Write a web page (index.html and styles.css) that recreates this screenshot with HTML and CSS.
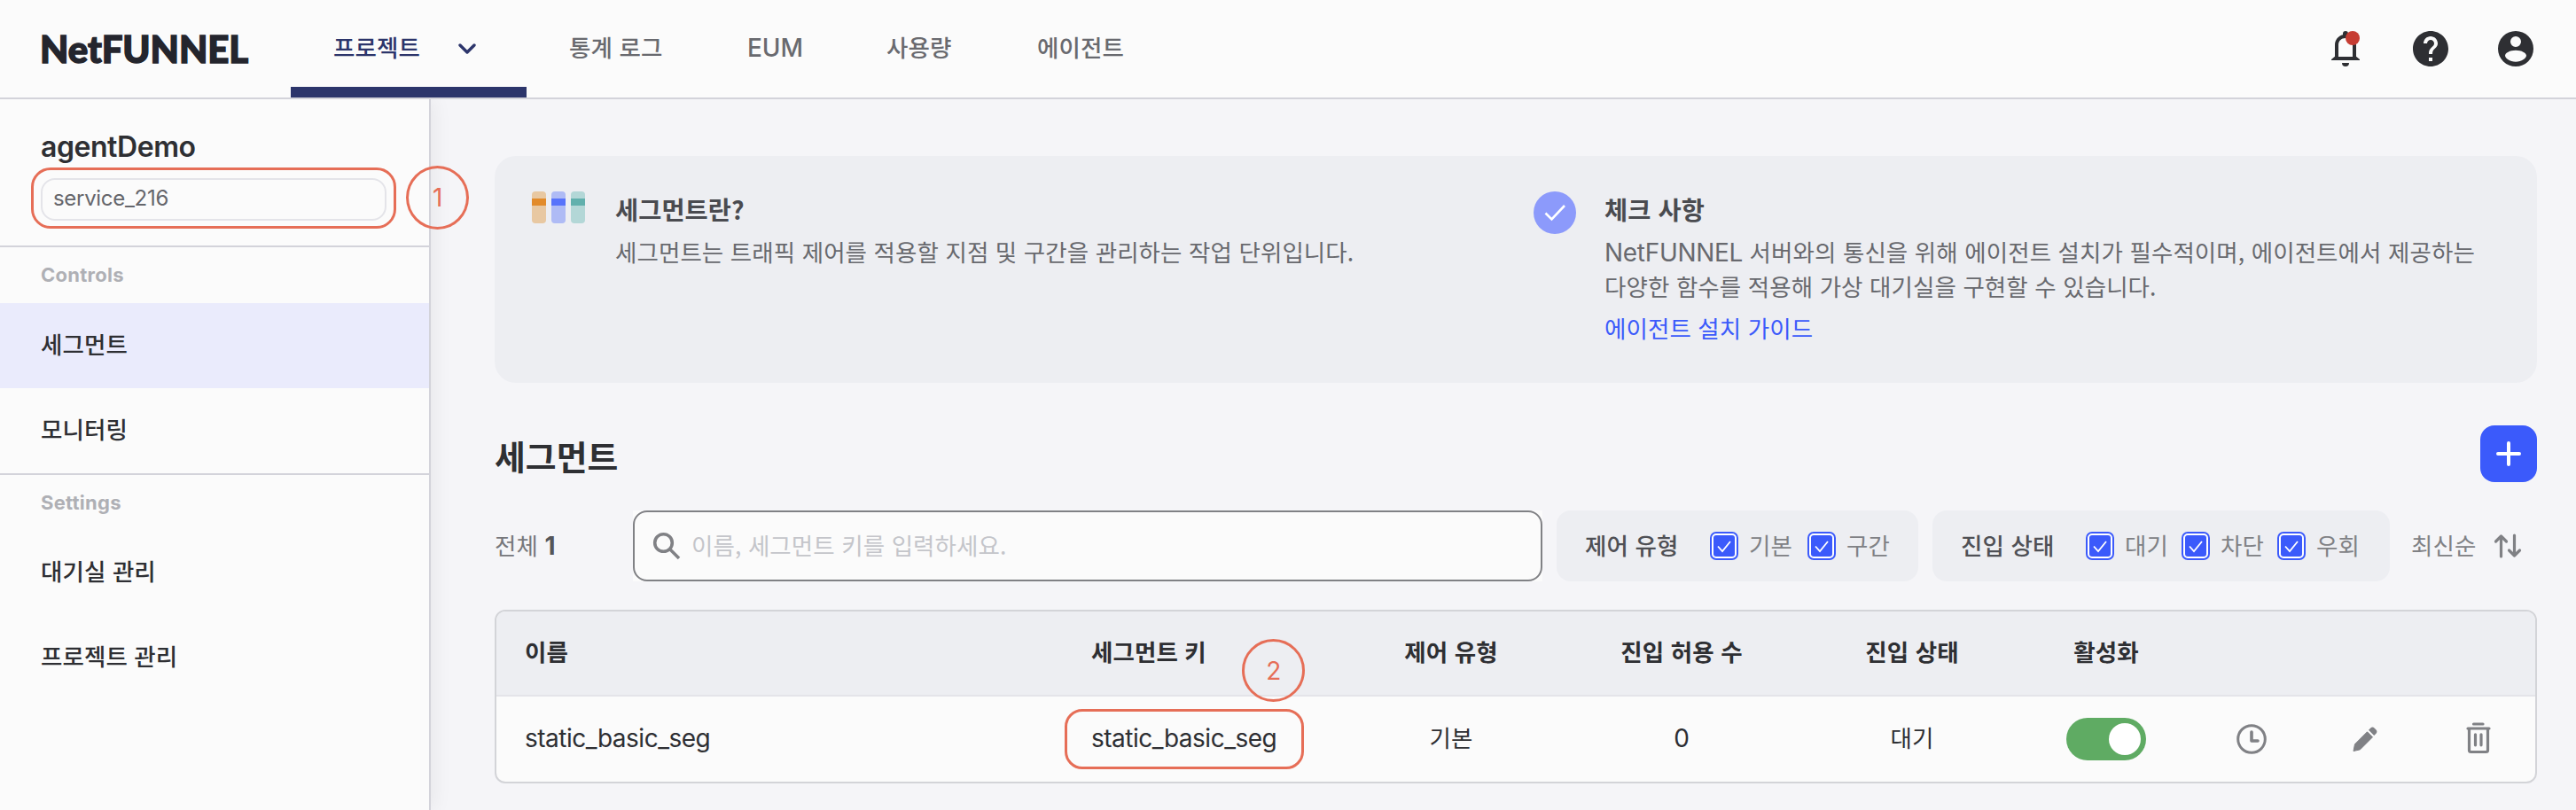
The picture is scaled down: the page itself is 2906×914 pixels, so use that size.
FILE: index.html
```html
<!DOCTYPE html>
<html lang="ko">
<head>
<meta charset="utf-8">
<title>NetFUNNEL</title>
<link rel="stylesheet" href="styles.css">
</head>
<body>
<header class="topbar">
  <div class="logo">NetFUNNEL</div>
  <nav class="tabs">
    <a class="tab tab-active"><span>프로젝트</span>
      <svg class="chevron" width="20" height="12" viewBox="0 0 20 12" fill="none" stroke="currentColor" stroke-width="3.4" stroke-linecap="round" stroke-linejoin="round"><path d="M2 2l8 8 8-8"/></svg>
    </a>
    <a class="tab tab-stats">통계 로그</a>
    <a class="tab tab-eum latin">EUM</a>
    <a class="tab tab-usage">사용량</a>
    <a class="tab">에이전트</a>
  </nav>
  <div class="tools">
    <span class="bell">
      <svg width="48" height="48" viewBox="0 0 24 24" fill="currentColor"><path d="M4 18.500V18l2-1.600V10c0-3.100 1.900-5.300 4.500-5.900V3.500a1.500 1.500 0 0 1 3 0v.6C16.100 4.700 18 6.900 18 10v6.400l2 1.600v.5zM8 16.500h8V10c0-2.400-1.600-4-4-4s-4 1.600-4 4zM10 20h4a2 2 0 0 1-4 0z"/></svg>
      <i class="dot"></i>
    </span>
    <svg width="48" height="48" viewBox="0 0 24 24" fill="currentColor"><path d="M12 2C6.480 2 2 6.480 2 12s4.480 10 10 10 10-4.480 10-10S17.520 2 12 2zm1 17h-2v-2h2v2zm2.070-7.750-.9.920C13.450 12.900 13 13.500 13 15h-2v-.5c0-1.100.450-2.100 1.170-2.830l1.240-1.260c.370-.360.590-.860.590-1.410 0-1.100-.9-2-2-2s-2 .9-2 2H8c0-2.210 1.790-4 4-4s4 1.790 4 4c0 .880-.360 1.680-.930 2.250z"/></svg>
    <svg width="48" height="48" viewBox="0 0 24 24" fill="currentColor" fill-rule="evenodd"><path d="M12 2a10 10 0 1 0 0 20 10 10 0 0 0 0-20zm0 3a3 3 0 1 1 0 6 3 3 0 0 1 0-6zM12 12.900c3.300 0 6 1.500 6 3 0 1.400-2.700 3.500-6 3.500s-6-2.100-6-3.500c0-1.500 2.700-3 6-3z"/></svg>
  </div>
</header>
<div class="body">
  <aside class="sidebar">
    <div class="project">
      <h1 class="project-name">agentDemo</h1>
      <div class="service">service_216
        <i class="mark mark-service"></i>
        <b class="num num-one">1</b>
      </div>
    </div>
    <section class="group">
      <h2 class="group-title">Controls</h2>
      <a class="item item-active">세그먼트</a>
      <a class="item">모니터링</a>
    </section>
    <section class="group group-settings">
      <h2 class="group-title">Settings</h2>
      <a class="item">대기실 관리</a>
      <a class="item">프로젝트 관리</a>
    </section>
  </aside>
  <main class="main">
    <section class="info">
      <div class="info-col info-segment">
        <svg class="info-icon" width="60" height="36" viewBox="0 0 60 36">
          <rect width="16" height="36" rx="4" fill="#e8c8a2"/><rect y="8" width="16" height="8" fill="#e28b2b"/>
          <rect x="22" width="16" height="36" rx="4" fill="#afbbf5"/><rect x="22" y="8" width="16" height="8" fill="#5873fb"/>
          <rect x="44" width="16" height="36" rx="4" fill="#b3d7d7"/><rect x="44" y="8" width="16" height="8" fill="#61b0ad"/>
        </svg>
        <div class="info-text">
          <h3>세그먼트란?</h3>
          <p>세그먼트는 트래픽 제어를 적용할 지점 및 구간을 관리하는 작업 단위입니다.</p>
        </div>
      </div>
      <div class="info-col">
        <svg class="info-icon" width="48" height="48" viewBox="0 0 48 48"><circle cx="24" cy="24" r="24" fill="#8c9afb"/><path d="M13.500 24.500l7 7L35 16" fill="none" stroke="#fff" stroke-width="2.600"/></svg>
        <div class="info-text">
          <h3>체크 사항</h3>
          <p><span class="latin">NetFUNNEL</span> 서버와의 통신을 위해 에이전트 설치가 필수적이며, 에이전트에서 제공하는<br>다양한 함수를 적용해 가상 대기실을 구현할 수 있습니다.</p>
          <a class="guide">에이전트 설치 가이드</a>
        </div>
      </div>
    </section>
    <div class="heading">
      <h2>세그먼트</h2>
      <button class="add"><svg width="28" height="28" viewBox="0 0 28 28" stroke="#fff" stroke-width="4" stroke-linecap="round"><path d="M14 2v24M2 14h24"/></svg></button>
    </div>
    <div class="filters">
      <div class="total">전체 <b>1</b></div>
      <div class="search-wrap"><div class="search">
        <svg width="32" height="32" viewBox="0 0 32 32" fill="none" stroke="#808185" stroke-width="3.600"><circle cx="12.500" cy="12.500" r="9.800"/><path d="M19.500 19.500L30 30"/></svg>
        <span>이름, 세그먼트 키를 입력하세요.</span>
      </div></div>
      <div class="filter">
        <span class="filter-name">제어 유형</span>
        <label class="option option-type"><i class="box"><svg viewBox="0 0 24 24"><path d="M5 12.500l5 5.500 9-11"/></svg></i><span>기본</span></label>
        <label class="option"><i class="box"><svg viewBox="0 0 24 24"><path d="M5 12.500l5 5.500 9-11"/></svg></i><span>구간</span></label>
      </div>
      <div class="filter filter-state">
        <span class="filter-name">진입 상태</span>
        <label class="option"><i class="box"><svg viewBox="0 0 24 24"><path d="M5 12.500l5 5.500 9-11"/></svg></i><span>대기</span></label>
        <label class="option"><i class="box"><svg viewBox="0 0 24 24"><path d="M5 12.500l5 5.500 9-11"/></svg></i><span>차단</span></label>
        <label class="option"><i class="box"><svg viewBox="0 0 24 24"><path d="M5 12.500l5 5.500 9-11"/></svg></i><span>우회</span></label>
      </div>
      <div class="sort"><span>최신순</span>
        <svg width="32" height="28" viewBox="0 0 32 28" fill="none" stroke="#808185" stroke-width="3.200" stroke-linecap="round" stroke-linejoin="round"><path d="M8.500 26V3M2.500 9l6-6 6 6M23.500 2v23M17.500 19l6 6 6-6"/></svg>
      </div>
    </div>
    <div class="table">
      <div class="row row-head">
        <div>이름</div><div>세그먼트 키</div><div class="mid">제어 유형</div><div class="mid">진입 허용 수</div><div class="mid">진입 상태</div><div class="mid">활성화</div>
      </div>
      <div class="row">
        <div class="latin seg">static_basic_seg</div>
        <div class="latin seg key">static_basic_seg<i class="mark mark-key"></i><b class="num num-two">2</b></div>
        <div class="mid ko">기본</div><div class="mid latin zero">0</div><div class="mid ko">대기</div>
        <div class="mid"><span class="toggle"></span></div>
        <div class="mid"><svg width="34" height="34" viewBox="0 0 34 34" fill="none" stroke="#808185" stroke-width="3"><circle cx="17" cy="17" r="15.300"/><path d="M17 9v10h7" stroke-width="3.600" stroke-linejoin="round" stroke-linecap="round"/></svg></div>
        <div class="mid"><svg width="30" height="30" viewBox="0 0 30 30" fill="#808185"><path d="M2 28.500l1.500-7.700L17.500 6.800l6 6L9.500 26.800z" stroke="#808185" stroke-linejoin="round"/><path d="M19 4.800l2.300-2.300c1.200-1.200 3-1.200 4.200 0l2 2c1.200 1.200 1.200 3 0 4.200L25.200 11z"/></svg></div>
        <div class="mid trash"><svg width="28" height="36" viewBox="0 0 28 36" fill="none" stroke="#808185" stroke-width="3.200" stroke-linecap="round"><path d="M8.500 2h10.500M2 7h24"/><path d="M3.500 8v23.500a2 2 0 0 0 2 2h17a2 2 0 0 0 2-2V8M10.500 13.800v12M17 13.800v12"/></svg></div>
      </div>
    </div>
  </main>
</div>
</body>
</html>
```
FILE: styles.css
```css
* { box-sizing: border-box; }
body { margin: 0; width: 2906px; height: 914px; overflow: hidden; background: #f5f5f8; color: #2e2f33; font: 26.5px/40px "Noto Sans CJK KR", sans-serif; letter-spacing: .08px; }
h1, h2, h3, p { margin: 0; }
i, b { font-style: normal; }
svg { display: block; flex: none; }
.latin { font-family: Inter, "Noto Sans CJK KR", sans-serif; font-size: 28px; letter-spacing: -.1px; }

.topbar { height: 112px; background: #fbfbfb; border-bottom: 2px solid #d3d3da; display: flex; }
.logo { width: 328px; padding-left: 45px; font: 900 42px/110px Lato, sans-serif; letter-spacing: -.1px; color: #24252d; white-space: nowrap; -webkit-text-stroke: 1.4px #24252d; }
.tabs { display: flex; flex: 1; color: #696a6f; font-weight: 500; line-height: 106px; }
.tab { padding: 0 48px; white-space: nowrap; }
.tab-active { width: 266px; display: flex; justify-content: space-between; align-items: center; padding-right: 57px; color: #2c356b; box-shadow: inset 0 -12px #2c356b; height: 110px; }
.tab-active span { margin-top: -4px; }
.tab-stats { width: 201px; }
.tab-eum { width: 157px; line-height: 108px; }
.tab-usage { width: 170px; }
.tools { display: flex; gap: 48px; align-items: center; padding-right: 44px; color: #2e2f33; }
.bell { position: relative; }
.dot { position: absolute; left: 24px; top: 4px; width: 16px; height: 16px; border-radius: 50%; background: #c63c32; }

.body { display: flex; height: 802px; }
.sidebar { width: 486px; background: #fbfbfb; border-right: 2px solid #d3d3da; box-shadow: 4px 0 20px rgba(0, 0, 0, .06); clip-path: inset(0 -60px 0 0); position: relative; z-index: 1; }
.project { height: 167px; padding: 34px 46px 0; border-bottom: 2px solid #d3d3da; }
.project-name { font: 600 32px/40px Inter, sans-serif; letter-spacing: -.45px; }
.service { position: relative; width: 390px; height: 48px; margin-top: 15px; padding-left: 12px; border: 2px solid #e4e4e9; border-radius: 16px; font: 24px/42px Inter, sans-serif; letter-spacing: -.3px; color: #65666b; }
.mark { position: absolute; border: 3px solid #e66e57; border-radius: 22px; }
.mark-service { left: -13px; top: -14px; width: 412px; height: 69px; }
.num { position: absolute; width: 71px; height: 72px; border: 3px solid #e66e57; border-radius: 50%; color: #e66e57; font: 400 28px/66px Inter, sans-serif; text-align: center; }
.num-one { left: 410px; top: -16px; }
.group { padding-top: 13px; }
.group-title { padding-left: 46px; height: 50px; font: 700 22px/36px Inter, sans-serif; letter-spacing: .25px; color: #afb0b5; }
.group-settings { border-top: 2px solid #d3d3da; }
.group-settings .group-title { height: 49px; }
.item { display: block; height: 96px; padding-left: 46px; font-weight: 500; line-height: 92px; }
.item-active { background: #eaebfc; }

.main { flex: 1; padding: 64px 44px 0 72px; }
.info { height: 256px; display: flex; border-radius: 24px; background: #edeef2; padding: 40px 42px; }
.info-col { display: flex; white-space: nowrap; }
.info-segment { width: 1130px; gap: 34px; }
.info-col:last-child { gap: 32px; }
.info-text { color: #68696e; line-height: 39px; }
.info-text h3 { margin-bottom: 8px; font-size: 28.4px; font-weight: 700; line-height: 40px; color: #4a4b50; }
.info-text .latin { line-height: 1; letter-spacing: -.3px; }
.guide { display: block; margin-top: 8px; color: #3b5afb; }

.heading { display: flex; justify-content: space-between; margin-top: 48px; height: 64px; }
.heading h2 { font-size: 37.8px; font-weight: 700; line-height: 67px; }
.add { width: 64px; height: 64px; display: grid; place-items: center; border: 0; border-radius: 16px; background: #3b5afb; }

.filters { display: flex; height: 80px; margin-top: 32px; align-items: center; white-space: nowrap; color: #808185; }
.total { width: 156px; padding-bottom: 2px; color: #77787c; }
.total b { font: 700 28px/1 Inter, sans-serif; color: #55565a; }
.search-wrap { width: 1026px; background: #fbfbfb; }
.search { height: 80px; display: flex; align-items: center; gap: 12px; padding-left: 20px; border: 2px solid #808185; border-radius: 16px; color: #c4c5ca; }
.search span, .sort span { padding-bottom: 2px; }
.filter { display: flex; align-items: center; width: 408px; height: 80px; margin-left: 16px; padding-left: 32px; border-radius: 16px; background: #edeef2; }
.filter-state { width: 516px; }
.filter-name { width: 141px; padding-bottom: 2px; font-weight: 500; color: #4f5055; }
.option { display: flex; align-items: center; width: 108px; gap: 12px; line-height: 36px; }
.option span { padding-bottom: 3px; }
.option-type { width: 110px; }
.box { width: 32px; height: 32px; border: 2px solid #3b5afb; border-radius: 7px; padding: 2px; background: #fff; }
.box svg { width: 24px; height: 24px; border-radius: 3px; background: #3b5afb; fill: none; stroke: #fff; stroke-width: 1.8; }
.sort { display: flex; align-items: center; gap: 20px; margin-left: 24px; }

.table { margin-top: 32px; height: 196px; border: 2px solid #d3d4d8; border-radius: 12px; background: #fbfbfb; }
.row { display: grid; grid-template-columns: 639px 276px 260px 260px 260px 178px 150px 106px 139px; height: 96px; padding-left: 32px; align-items: center; }
.row-head { border-bottom: 2px solid #e4e4e9; border-radius: 10px 10px 0 0; background: #edeef2; font-weight: 700; padding-bottom: 4px; }
.mid { display: flex; justify-content: center; }
.ko { padding-bottom: 5px; }
.zero { padding-bottom: 2px; }
.seg { letter-spacing: -.5px; padding-bottom: 3px; }
.trash { padding: 0 0 3px 11px; }
.key { position: relative; }
.mark-key { left: -30px; top: -13px; width: 270px; height: 68px; border-radius: 20px; }
.num-two { left: 170px; top: -92px; height: 71px; }
.toggle { width: 90px; height: 48px; padding: 6px; border-radius: 24px; background: #5fab63; }
.toggle::after { content: ""; display: block; width: 36px; height: 36px; margin-left: 42px; border-radius: 50%; background: #fff; }
```
